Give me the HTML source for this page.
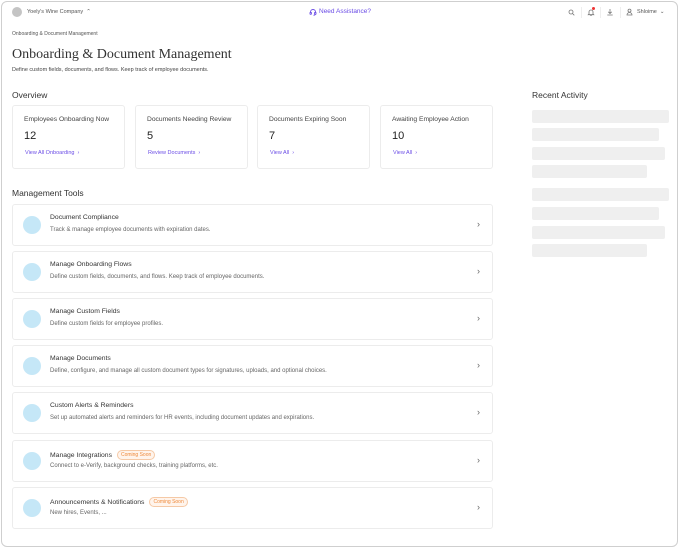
<!DOCTYPE html><html><head><style>
*{margin:0;padding:0;box-sizing:border-box}
body{width:679px;height:548px;background:#fff;font-family:"Liberation Sans",sans-serif;color:#333;position:relative;overflow:hidden}
.frame{position:absolute;left:1px;top:1px;width:677px;height:546px;border:1px solid #cfcfcf;border-radius:6px}
.a{position:absolute}
.card{position:absolute;top:105px;width:113px;height:64px;border:1px solid #ececec;border-radius:3px}
.card .t{position:absolute;left:11px;top:10px;font-size:6.7px;color:#444;white-space:nowrap}
.card .n{position:absolute;left:11px;top:24px;font-size:11px;color:#222}
.card .l{position:absolute;left:12px;top:44px;font-size:5.5px;color:#6b4de6;white-space:nowrap}
.row{position:absolute;left:12px;width:481px;border:1px solid #ececec;border-radius:3px}
.row .c{position:absolute;left:10px;width:18px;height:18px;border-radius:50%;background:#c5e7f7}
.row .h{position:absolute;left:37px;font-size:6.8px;color:#333;white-space:nowrap}
.row .d{position:absolute;left:37px;font-size:6px;color:#666;white-space:nowrap}
.row .ch{position:absolute;right:12px;font-size:9px;color:#666}
.badge{display:inline-block;margin-left:5px;border:1px solid #f5c9a6;background:#fff4ec;color:#ee8a3c;font-size:5px;padding:1px 3px;border-radius:5px;vertical-align:1px}
.sk{position:absolute;left:532px;height:13px;background:#efefef;border-radius:2px}
</style></head><body>
<div class="frame"></div>
<div class="a" style="left:12px;top:7px;width:10px;height:10px;border-radius:50%;background:#c4c4c4"></div>
<div class="a" style="left:27px;top:9px;font-size:5.5px;color:#555">Yoely's Wine Company &nbsp;⌃</div>
<svg class="a" style="left:309px;top:8px" width="8" height="8" viewBox="0 0 8 8" fill="none" stroke="#6b4de6" stroke-width="0.9"><path d="M1.5 5V4a2.5 2.5 0 0 1 5 0v1"/><rect x="1" y="4.3" width="1.4" height="2" rx=".4"/><rect x="5.6" y="4.3" width="1.4" height="2" rx=".4"/><path d="M6.3 6.3Q6 7.3 4.5 7.3"/></svg>
<div class="a" style="left:319px;top:8px;font-size:6.5px;color:#6b4de6">Need Assistance?</div>
<svg class="a" style="left:568px;top:9px" width="7" height="7" viewBox="0 0 7 7" fill="none" stroke="#777" stroke-width=".8"><circle cx="3" cy="3" r="2"/><path d="M4.5 4.5L6.3 6.3"/></svg>
<div class="a" style="left:581px;top:7px;width:1px;height:11px;background:#eee"></div>
<svg class="a" style="left:587px;top:8px" width="8" height="9" viewBox="0 0 8 9" fill="none" stroke="#777" stroke-width=".8"><path d="M2 6V4a2 2 0 0 1 4 0v2l.7.7H1.3z"/><path d="M3.3 7.6h1.4"/></svg>
<div class="a" style="left:592px;top:7px;width:3px;height:3px;border-radius:50%;background:#e33"></div>
<div class="a" style="left:600px;top:7px;width:1px;height:11px;background:#eee"></div>
<svg class="a" style="left:606px;top:8px" width="8" height="8" viewBox="0 0 8 8" fill="none" stroke="#777" stroke-width=".8"><path d="M4 1v4.5M2.3 3.8L4 5.5 5.7 3.8M1.3 7h5.4"/></svg>
<div class="a" style="left:620px;top:7px;width:1px;height:11px;background:#eee"></div>
<svg class="a" style="left:626px;top:8px" width="7" height="8" viewBox="0 0 7 8" fill="none" stroke="#777" stroke-width=".8"><circle cx="3.5" cy="2.6" r="1.5"/><path d="M1 7a2.5 2.5 0 0 1 5 0z"/></svg>
<div class="a" style="left:637px;top:9px;font-size:5.5px;color:#555">Shloime &nbsp;⌄</div>
<div class="a" style="left:12px;top:31px;font-size:5px;color:#555">Onboarding &amp; Document Management</div>
<div class="a" style="left:12px;top:47px;font-family:'Liberation Serif',serif;font-size:14px;color:#333">Onboarding &amp; Document Management</div>
<div class="a" style="left:12px;top:67px;font-size:5.5px;color:#444">Define custom fields, documents, and flows. Keep track of employee documents.</div>
<div class="a" style="left:12px;top:90px;font-size:8.5px;color:#333">Overview</div>
<div class="a" style="left:532px;top:90px;font-size:8.5px;color:#333">Recent Activity</div>
<div class="card" style="left:12px"><div class="t">Employees Onboarding Now</div><div class="n">12</div><div class="l">View All Onboarding &nbsp;›</div></div>
<div class="card" style="left:135px"><div class="t">Documents Needing Review</div><div class="n">5</div><div class="l">Review Documents &nbsp;›</div></div>
<div class="card" style="left:257px"><div class="t">Documents Expiring Soon</div><div class="n">7</div><div class="l">View All &nbsp;›</div></div>
<div class="card" style="left:380px"><div class="t">Awaiting Employee Action</div><div class="n">10</div><div class="l">View All &nbsp;›</div></div>
<div class="a" style="left:12px;top:188px;font-size:8.5px;color:#333">Management Tools</div>
<div class="row" style="top:204px;height:42px"><div class="c" style="top:11px"></div><div class="h" style="top:9px">Document Compliance</div><div class="d" style="top:22px">Track &amp; manage employee documents with expiration dates.</div><div class="ch" style="top:14px">›</div></div>
<div class="row" style="top:251px;height:42px"><div class="c" style="top:11px"></div><div class="h" style="top:9px">Manage Onboarding Flows</div><div class="d" style="top:22px">Define custom fields, documents, and flows. Keep track of employee documents.</div><div class="ch" style="top:14px">›</div></div>
<div class="row" style="top:298px;height:42px"><div class="c" style="top:11px"></div><div class="h" style="top:9px">Manage Custom Fields</div><div class="d" style="top:22px">Define custom fields for employee profiles.</div><div class="ch" style="top:14px">›</div></div>
<div class="row" style="top:345px;height:42px"><div class="c" style="top:11px"></div><div class="h" style="top:9px">Manage Documents</div><div class="d" style="top:22px">Define, configure, and manage all custom document types for signatures, uploads, and optional choices.</div><div class="ch" style="top:14px">›</div></div>
<div class="row" style="top:392px;height:42px"><div class="c" style="top:11px"></div><div class="h" style="top:9px">Custom Alerts &amp; Reminders</div><div class="d" style="top:22px">Set up automated alerts and reminders for HR events, including document updates and expirations.</div><div class="ch" style="top:14px">›</div></div>
<div class="row" style="top:440px;height:42px"><div class="c" style="top:11px"></div><div class="h" style="top:9px">Manage Integrations<span class="badge">Coming Soon</span></div><div class="d" style="top:22px">Connect to e-Verify, background checks, training platforms, etc.</div><div class="ch" style="top:14px">›</div></div>
<div class="row" style="top:487px;height:42px"><div class="c" style="top:11px"></div><div class="h" style="top:9px">Announcements &amp; Notifications<span class="badge">Coming Soon</span></div><div class="d" style="top:22px">New hires, Events, ...</div><div class="ch" style="top:14px">›</div></div>
<div class="sk" style="top:110px;width:137px"></div>
<div class="sk" style="top:128px;width:127px"></div>
<div class="sk" style="top:147px;width:133px"></div>
<div class="sk" style="top:165px;width:115px"></div>
<div class="sk" style="top:188px;width:137px"></div>
<div class="sk" style="top:207px;width:127px"></div>
<div class="sk" style="top:226px;width:133px"></div>
<div class="sk" style="top:244px;width:115px"></div>
</body></html>
